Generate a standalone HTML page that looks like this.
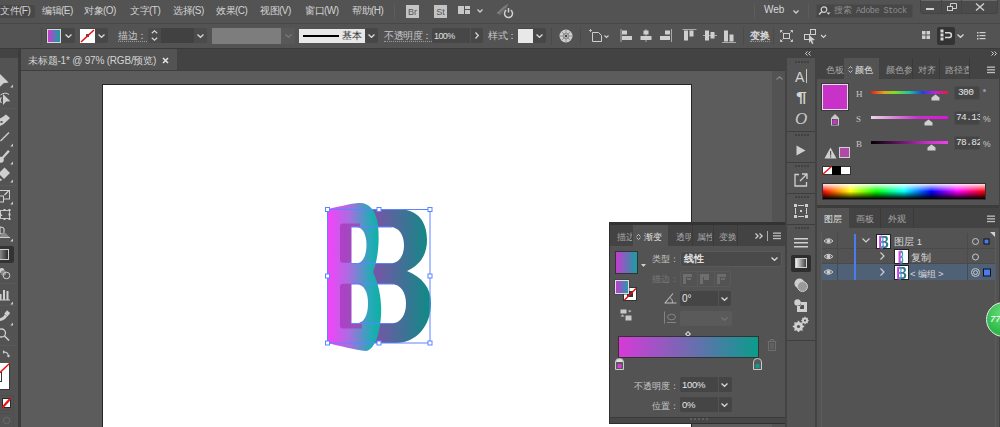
<!DOCTYPE html>
<html><head><meta charset="utf-8">
<style>
*{margin:0;padding:0;box-sizing:border-box}
html,body{width:1000px;height:427px;overflow:hidden;background:#535353;font-family:"Liberation Sans",sans-serif;color:#d2d2d2;font-size:10px}
.a{position:absolute}
.t{position:absolute;white-space:nowrap;line-height:10px;font-size:10px}
svg{position:absolute;overflow:visible}
.ul{border-bottom:1px dotted #9a9a9a}
.box{position:absolute;background:#474747;border-radius:2px}
.cb{position:absolute;background:#474747;border-radius:2px}
</style></head><body>
<!-- ================= MENU BAR ================= -->
<div class="a" style="left:0;top:0;width:1000px;height:23px;background:#535353"></div>
<div class="a" style="left:0;top:23px;width:1000px;height:1px;background:#474747"></div>
<div class="a" style="left:-3px;top:5px;width:38px;height:13px;background:#484848;border-radius:2px"></div>
<div class="t" style="left:0;top:6px;letter-spacing:-0.5px">文件(F)</div>
<div class="t" style="left:42px;top:6px;letter-spacing:-0.5px">编辑(E)</div>
<div class="t" style="left:84px;top:6px;letter-spacing:-0.5px">对象(O)</div>
<div class="t" style="left:130px;top:6px;letter-spacing:-0.5px">文字(T)</div>
<div class="t" style="left:173px;top:6px;letter-spacing:-0.5px">选择(S)</div>
<div class="t" style="left:216px;top:6px;letter-spacing:-0.5px">效果(C)</div>
<div class="t" style="left:260px;top:6px;letter-spacing:-0.5px">视图(V)</div>
<div class="t" style="left:305px;top:6px;letter-spacing:-0.5px">窗口(W)</div>
<div class="t" style="left:352px;top:6px;letter-spacing:-0.5px">帮助(H)</div>
<div class="a" style="left:394px;top:4px;width:1px;height:15px;background:#5c5c5c"></div>
<!-- Br St -->
<div class="a" style="left:406px;top:5px;width:13px;height:13px;background:#c4c4c4"></div>
<div class="t" style="left:407px;top:7px;width:11px;text-align:center;color:#555;font-size:9px">Br</div>
<div class="a" style="left:434px;top:5px;width:13px;height:13px;background:#c4c4c4"></div>
<div class="t" style="left:435px;top:7px;width:11px;text-align:center;color:#555;font-size:9px">St</div>
<!-- workspace layout icon -->
<div class="a" style="left:458px;top:6px;width:6px;height:8px;background:#c8c8c8"></div>
<div class="a" style="left:465px;top:6px;width:5px;height:3px;background:#c8c8c8"></div>
<div class="a" style="left:465px;top:10px;width:5px;height:4px;background:#c8c8c8"></div>
<svg style="left:477px;top:9px" width="6" height="4"><polyline points="0.5,0.5 3,3 5.5,0.5" fill="none" stroke="#cfcfcf" stroke-width="1.3"/></svg>
<!-- sync icon -->
<svg style="left:495px;top:2px" width="20" height="16">
 <path d="M1.5,11 L8,5 L13.5,1.5 L11,6.5 L5,13 Z" fill="#7c7c7c"/>
 <path d="M4,12.5 L10.5,6" stroke="#535353" stroke-width="0.8"/>
 <path d="M11.2,8.2 A4,4 0 1 0 15.8,8.2" fill="none" stroke="#d0d0d0" stroke-width="1.5"/>
 <line x1="13.5" y1="6" x2="13.5" y2="10.5" stroke="#d0d0d0" stroke-width="1.5"/>
</svg>
<!-- right of title bar -->
<div class="a" style="left:754px;top:4px;width:1px;height:15px;background:#5c5c5c"></div>
<div class="t" style="left:764px;top:5px;font-size:10px;color:#d8d8d8">Web</div>
<svg style="left:793px;top:10px" width="6" height="4"><polyline points="0.5,0.5 3,3 5.5,0.5" fill="none" stroke="#d0d0d0" stroke-width="1.3"/></svg>
<div class="a" style="left:808px;top:4px;width:1px;height:15px;background:#5c5c5c"></div>
<div class="a" style="left:816px;top:4px;width:97px;height:14px;background:#474747;border-radius:2px;border:1px solid #4d4d4d"></div>
<svg style="left:818px;top:6px" width="14" height="10">
 <circle cx="6" cy="3.6" r="2.8" fill="none" stroke="#d0d0d0" stroke-width="1.2"/>
 <line x1="4" y1="5.6" x2="1" y2="8.6" stroke="#d0d0d0" stroke-width="1.4"/>
 <path d="M8.5,6.5 L12.5,6.5 L10.5,8.7 Z" fill="#d0d0d0"/>
</svg>
<div class="t" style="left:834px;top:5px;color:#8e8e8e;font-size:9px">搜索</div>
<div class="t" style="left:856px;top:6px;color:#8e8e8e;font-family:'Liberation Mono',monospace;font-size:8.5px;letter-spacing:-0.5px">Adobe Stock</div>
<!-- window buttons -->
<div class="a" style="left:920px;top:-1px;width:78px;height:15px;background:#4b4b4b;border:1px solid #444;border-radius:0 0 3px 3px"></div>
<div class="a" style="left:921px;top:0;width:76px;height:1px;background:#6a6a6a"></div>
<div class="a" style="left:941px;top:0;width:1px;height:13px;background:#444"></div>
<div class="a" style="left:961px;top:0;width:1px;height:13px;background:#444"></div>
<div class="a" style="left:926px;top:8px;width:8px;height:2px;background:#cfcfcf"></div>
<svg style="left:947px;top:3px" width="10" height="8"><rect x="0.5" y="3.5" width="5" height="4" fill="none" stroke="#cfcfcf"/><path d="M3.5,3 V0.5 H9.5 V5.5 H6" fill="none" stroke="#cfcfcf"/></svg>
<svg style="left:975px;top:3px" width="10" height="8"><path d="M1,0.5 L9,7.5 M9,0.5 L1,7.5" stroke="#cfcfcf" stroke-width="1.4"/></svg>

<!-- ================= CONTROL BAR ================= -->
<div class="a" style="left:0;top:24px;width:1000px;height:24px;background:#535353"></div>
<div class="a" style="left:0;top:48px;width:1000px;height:1px;background:#3a3a3a"></div>
<div class="a" style="left:41px;top:27px;width:1px;height:18px;background:#4a4a4a"></div>
<!-- fill -->
<div class="cb" style="left:46px;top:28px;width:29px;height:15px"></div>
<div class="a" style="left:47px;top:29px;width:14px;height:14px;background:linear-gradient(90deg,#c83ad0,#16a0a0);border:1px solid #d8d8d8"></div>
<svg style="left:65px;top:34px" width="7" height="4"><polyline points="0.5,0.5 3.5,3.3 6.5,0.5" fill="none" stroke="#d6d6d6" stroke-width="1.3"/></svg>
<!-- stroke -->
<div class="cb" style="left:80px;top:28px;width:28px;height:15px"></div>
<div class="a" style="left:80px;top:29px;width:15px;height:14px;background:#fff"></div>
<div class="a" style="left:86px;top:34px;width:3px;height:3px;background:#555"></div>
<svg style="left:80px;top:29px" width="15" height="14"><line x1="1" y1="13" x2="14" y2="1" stroke="#e81010" stroke-width="1.6"/></svg>
<svg style="left:98px;top:34px" width="7" height="4"><polyline points="0.5,0.5 3.5,3.3 6.5,0.5" fill="none" stroke="#d6d6d6" stroke-width="1.3"/></svg>
<div class="t ul" style="left:118px;top:31px;color:#c8c8c8;letter-spacing:-0.4px">描边：</div>
<!-- stroke weight -->
<div class="cb" style="left:148px;top:28px;width:59px;height:15px;background:#4b4b4b"></div>
<svg style="left:151px;top:30px" width="7" height="11"><polyline points="0.8,3.2 3.5,0.8 6.2,3.2" fill="none" stroke="#d6d6d6" stroke-width="1.2"/><polyline points="0.8,7.8 3.5,10.2 6.2,7.8" fill="none" stroke="#d6d6d6" stroke-width="1.2"/></svg>
<div class="a" style="left:161px;top:28px;width:33px;height:15px;background:#414141"></div>
<svg style="left:197px;top:34px" width="7" height="4"><polyline points="0.5,0.5 3.5,3.3 6.5,0.5" fill="none" stroke="#d6d6d6" stroke-width="1.3"/></svg>
<!-- variable width -->
<div class="a" style="left:212px;top:28px;width:69px;height:16px;background:#7d7d7d"></div>
<div class="a" style="left:281px;top:28px;width:14px;height:16px;background:#585858"></div>
<svg style="left:285px;top:34px" width="7" height="4"><polyline points="0.5,0.5 3.5,3.3 6.5,0.5" fill="none" stroke="#7a7a7a" stroke-width="1.2"/></svg>
<!-- brush -->
<div class="a" style="left:299px;top:29px;width:66px;height:14px;background:#e8e8e8"></div>
<div class="a" style="left:303px;top:35px;width:36px;height:2px;background:#000"></div>
<div class="t" style="left:342px;top:31px;color:#303030">基本</div>
<div class="cb" style="left:365px;top:28px;width:13px;height:15px"></div>
<svg style="left:368px;top:34px" width="7" height="4"><polyline points="0.5,0.5 3.5,3.3 6.5,0.5" fill="none" stroke="#d6d6d6" stroke-width="1.3"/></svg>
<div class="t ul" style="left:384px;top:31px;color:#c8c8c8;letter-spacing:-0.5px">不透明度：</div>
<div class="cb" style="left:432px;top:28px;width:51px;height:15px"></div>
<div class="a" style="left:470px;top:28px;width:1px;height:15px;background:#535353"></div>
<div class="t" style="left:434px;top:31px;color:#e0e0e0;font-size:9px;letter-spacing:-0.6px">100%</div>
<svg style="left:475px;top:32px" width="4" height="7"><polyline points="0.5,0.5 3.3,3.5 0.5,6.5" fill="none" stroke="#d6d6d6" stroke-width="1.3"/></svg>
<div class="t" style="left:488px;top:31px;color:#c8c8c8;letter-spacing:-0.4px">样式：</div>
<div class="cb" style="left:518px;top:28px;width:28px;height:15px"></div>
<div class="a" style="left:518px;top:29px;width:15px;height:14px;background:#e8e8e8"></div>
<svg style="left:536px;top:34px" width="7" height="4"><polyline points="0.5,0.5 3.5,3.3 6.5,0.5" fill="none" stroke="#d6d6d6" stroke-width="1.3"/></svg>
<div class="a" style="left:551px;top:27px;width:1px;height:18px;background:#4a4a4a"></div>
<!-- globe / recolor -->
<svg style="left:559px;top:29px" width="15" height="15">
 <circle cx="7" cy="7" r="6.5" fill="#cfcfcf"/>
 <g stroke="#7a7a7a" stroke-width="0.7"><line x1="7" y1="1" x2="7" y2="13"/><line x1="1" y1="7" x2="13" y2="7"/><line x1="2.8" y1="2.8" x2="11.2" y2="11.2"/><line x1="11.2" y1="2.8" x2="2.8" y2="11.2"/></g>
 <circle cx="7" cy="7" r="3" fill="none" stroke="#7a7a7a" stroke-width="0.7"/>
 <circle cx="7" cy="7" r="1" fill="#333"/>
</svg>
<div class="a" style="left:580px;top:27px;width:1px;height:18px;background:#4a4a4a"></div>
<!-- artboard icon -->
<svg style="left:589px;top:29px" width="22" height="14">
 <path d="M3.5,3.5 H9.5 L12.5,6.5 V12.5 H3.5 Z" fill="none" stroke="#cfcfcf" stroke-width="1"/>
 <line x1="1.5" y1="0" x2="1.5" y2="3" stroke="#cfcfcf" stroke-width="0.8"/><line x1="0" y1="1.5" x2="3" y2="1.5" stroke="#cfcfcf" stroke-width="0.8"/>
 <polyline points="15.5,6.5 17.5,8.5 19.5,6.5" fill="none" stroke="#cfcfcf" stroke-width="1.1"/>
</svg>
<!-- align icons -->
<svg style="left:620px;top:28px" width="120" height="16" fill="#cfcfcf">
 <rect x="0.5" y="1" width="1" height="13" fill="#aaa"/><rect x="2" y="2.5" width="5" height="4"/><rect x="2" y="8" width="10" height="4"/>
 <rect x="25.5" y="1" width="1" height="13" fill="#aaa"/><rect x="23.5" y="2.5" width="5" height="4"/><rect x="20.5" y="8" width="11" height="4"/>
 <rect x="51" y="1" width="1" height="13" fill="#aaa"/><rect x="45" y="2.5" width="5" height="4"/><rect x="40" y="8" width="10" height="4"/>
 <rect x="62.5" y="1" width="14" height="1" fill="#aaa"/><rect x="64" y="2.5" width="4" height="10"/><rect x="69.5" y="2.5" width="4" height="6"/>
 <rect x="83" y="7" width="14" height="1" fill="#aaa"/><rect x="85" y="2.5" width="4" height="10"/><rect x="90.5" y="4" width="4" height="6.5"/>
 <rect x="102" y="14" width="14" height="1" fill="#aaa"/><rect x="104" y="2.5" width="4" height="11"/><rect x="109.5" y="6.5" width="4" height="7"/>
</svg>
<div class="a" style="left:743px;top:27px;width:1px;height:18px;background:#4a4a4a"></div>
<div class="t ul" style="left:750px;top:31px;color:#d8d8d8;font-weight:bold;font-size:9.5px">变换</div>
<div class="a" style="left:773px;top:27px;width:1px;height:18px;background:#4a4a4a"></div>
<!-- isolate icon -->
<svg style="left:780px;top:30px" width="14" height="13" fill="none" stroke="#cfcfcf">
 <rect x="3.5" y="3.5" width="6" height="5" stroke-width="1"/>
 <path d="M0.5,0.5 L2.5,2.5 M0.5,2.5 V0.5 H2.5 M12.5,0.5 L10.5,2.5 M10.5,0.5 H12.5 V2.5 M0.5,11.5 L2.5,9.5 M0.5,9.5 V11.5 H2.5 M12.5,11.5 L10.5,9.5 M12.5,9.5 V11.5 H10.5" stroke-width="0.9"/>
</svg>
<svg style="left:804px;top:29px" width="26" height="15">
 <rect x="0.5" y="5.5" width="5" height="5" fill="none" stroke="#cfcfcf"/>
 <rect x="6.5" y="0.5" width="5" height="5" fill="none" stroke="#cfcfcf"/>
 <path d="M5,6 L11,11 L8,11.5 L9.5,14.5 L8,15 L6.5,12 L5,14 Z" fill="#cfcfcf"/>
 <polyline points="17,6 19.5,8.5 22,6" fill="none" stroke="#cfcfcf" stroke-width="1.2"/>
</svg>
<!-- right icons -->
<svg style="left:921px;top:30px" width="11" height="11" fill="#cfcfcf">
 <rect x="1" y="1" width="3.5" height="3.5"/><rect x="5.5" y="1" width="3.5" height="3.5"/><rect x="1" y="5.5" width="3.5" height="3.5"/><rect x="5.5" y="5.5" width="3.5" height="3.5"/>
</svg>
<div class="a" style="left:937px;top:27px;width:18px;height:18px;background:#333;border-radius:2px"></div>
<svg style="left:940px;top:29px" width="14" height="13">
 <rect x="0.5" y="0.5" width="3" height="3" fill="#d8d8d8"/><rect x="0.5" y="4.5" width="3" height="3" fill="#d8d8d8"/><rect x="0.5" y="8.5" width="3" height="3" fill="#d8d8d8"/>
 <path d="M5,3.8 H9 A2.4,2.4 0 0 1 9,8.6 H5" fill="none" stroke="#d8d8d8" stroke-width="1.5"/>
</svg>
<svg style="left:957px;top:34px" width="7" height="4"><polyline points="0.5,0.5 3.5,3.3 6.5,0.5" fill="none" stroke="#d6d6d6" stroke-width="1.3"/></svg>
<svg style="left:977px;top:31px" width="10" height="9" fill="#cfcfcf">
 <rect x="0" y="1" width="1.5" height="1.5"/><rect x="2.5" y="1" width="6" height="1.2"/>
 <rect x="0" y="4" width="1.5" height="1.5"/><rect x="2.5" y="4" width="6" height="1.2"/>
 <rect x="0" y="7" width="1.5" height="1.5"/><rect x="2.5" y="7" width="6" height="1.2"/>
</svg>

<!-- ================= TAB BAR ================= -->
<div class="a" style="left:21px;top:49px;width:764px;height:22px;background:#434343"></div>
<div class="a" style="left:21px;top:49px;width:156px;height:21px;background:#535353"></div>
<div class="t" style="left:28px;top:56px;color:#d4d4d4;letter-spacing:-0.2px">未标题-1* @ 97% (RGB/预览)</div>
<svg style="left:162px;top:57px" width="7" height="7"><path d="M1,1 L6,6 M6,1 L1,6" stroke="#e6e6e6" stroke-width="1.5"/></svg>

<!-- ================= LEFT TOOLBAR ================= -->
<div class="a" style="left:0;top:49px;width:18px;height:378px;background:#535353"></div>
<div class="a" style="left:0;top:49px;width:18px;height:9px;background:#434343"></div>
<div class="a" style="left:18px;top:49px;width:3px;height:378px;background:#3c3c3c"></div>
<svg style="left:0;top:58px" width="18" height="369">
 <g transform="translate(0,-58)" fill="#cfcfcf">
  <path d="M-1,73 L8.6,82.6 L3.6,83.2 L0,86.8 Z"/>
  <path d="M10.3,87.5 L13,84.5 L13,87.5 Z"/>
  <path d="M3,94 L10.3,101.3 L6.3,101.5 L3,105 Z"/>
  <path d="M0.5,95 Q5,91.5 9,94.5" fill="none" stroke="#cfcfcf" stroke-width="1"/>
  <path d="M1.5,97.5 Q-1,100 1.5,103" fill="none" stroke="#cfcfcf" stroke-width="1.1"/>
  <rect x="0" y="108" width="16" height="1" fill="#5a5a5a"/>
  <path d="M6,114.5 L10,118 L7.5,120.5 Q4,124.5 0,126 L-1,119 Q3,117 6,114.5 Z"/>
  <rect x="0.5" y="121" width="2" height="2" fill="#535353"/>
  <path d="M0,140.5 L8.5,132 L9.5,133 L1,141.5 Z"/>
  <path d="M10.3,146.5 L13,143.5 L13,146.5 Z"/>
  <path d="M8,150 L9.8,151.5 L3,159 L1.5,157.5 Z"/><circle cx="0.8" cy="159.8" r="3"/>
  <path d="M10.3,164.5 L13,161.5 L13,164.5 Z"/>
  <path d="M4.5,167.5 L10,173 L4,179 L-1.5,173.5 Z"/><path d="M-1,177.5 L2.5,180 L0,181 L-1,181 Z"/>
  <path d="M10.3,182.5 L13,179.5 L13,182.5 Z"/>
  <rect x="0" y="185" width="16" height="1" fill="#5a5a5a"/>
  <rect x="-1" y="190.5" width="10.5" height="8.5" fill="none" stroke="#cfcfcf" stroke-width="1"/>
  <rect x="-1" y="196" width="4.5" height="6" fill="#535353" stroke="#cfcfcf" stroke-width="1"/>
  <path d="M4.5,195 L8.5,191" stroke="#cfcfcf" stroke-width="1.2"/>
  <path d="M10.3,204.5 L13,201.5 L13,204.5 Z"/>
  <rect x="0.5" y="210.5" width="9" height="8" fill="none" stroke="#cfcfcf" stroke-width="0.9"/><rect x="3.5" y="209" width="2" height="2"/><rect x="8.5" y="209" width="2" height="2"/><rect x="8.5" y="213.5" width="2" height="2"/><rect x="8.5" y="218" width="2" height="2"/><rect x="3.5" y="218" width="2" height="2"/>
  <path d="M0,212 L2.5,216 L0,216 Z"/>
  <path d="M0,227 Q4.5,227 4,230.5 Q4.5,234 0,234 Z" fill="none" stroke="#cfcfcf" stroke-width="1.2"/>
  <path d="M-1,237 L4,231.5 L9.5,237 Z" fill="#8a8a8a"/>
  <rect x="0" y="237" width="10" height="1"/>
  <path d="M10.3,241.5 L13,238.5 L13,241.5 Z"/>
 </g>
</svg>
<div class="a" style="left:0;top:246px;width:14px;height:17px;background:#333;border-radius:0 2px 2px 0"></div>
<div class="a" style="left:-1px;top:249px;width:10px;height:11px;border:1px solid #cfcfcf;background:linear-gradient(90deg,#888,#2a2a2a)"></div>
<svg style="left:0;top:262px" width="18" height="165">
 <g transform="translate(0,-262)" fill="#cfcfcf">
  <circle cx="1.8" cy="270.5" r="2.5" fill="#cfcfcf"/>
  <circle cx="3.5" cy="273" r="2.8" fill="#8a8a8a"/>
  <circle cx="6.5" cy="275.5" r="3.3" fill="none" stroke="#cfcfcf" stroke-width="1"/>
  <rect x="0" y="283" width="16" height="1" fill="#5a5a5a"/>
  <rect x="0" y="294" width="1.5" height="6"/><rect x="3" y="290" width="2" height="10"/><rect x="6.5" y="291" width="2" height="9"/><rect x="0" y="299.5" width="10" height="1"/>
  <path d="M10.3,304.5 L13,301.5 L13,304.5 Z"/>
  <rect x="0" y="305" width="16" height="1" fill="#5a5a5a"/>
  <path d="M4.3,313.8 L7,310.3 L10.2,313 L7.5,316.5 Z"/><path d="M4.8,314.5 Q3,318 -1,318.5 L-1,321 Q4.5,321 7.2,316.3 Z"/>
  <path d="M10.3,325.5 L13,322.5 L13,325.5 Z"/>
  <circle cx="1.5" cy="333" r="4" fill="none" stroke="#cfcfcf" stroke-width="1.3"/>
  <path d="M4.5,336 L9,340.5" stroke="#cfcfcf" stroke-width="1.6"/>
  <rect x="0" y="345" width="16" height="1" fill="#5a5a5a"/>
  <path d="M3.5,352 Q8,352 8.5,356" fill="none" stroke="#cfcfcf" stroke-width="1.1"/>
  <path d="M3,350 L5,352 L3,354 Z"/><path d="M6.5,355.5 L10.5,355.5 L8.5,357.5 Z"/>
 </g>
</svg>
<div class="a" style="left:0;top:363px;width:10px;height:27px;background:#fff;border-right:1px solid #3a3a3a;border-bottom:1px solid #3a3a3a"></div>
<div class="a" style="left:-1px;top:372px;width:3px;height:10px;border:1px solid #333"></div>
<svg style="left:0;top:363px" width="10" height="10"><line x1="0" y1="9.5" x2="9.5" y2="0.5" stroke="#e81010" stroke-width="1.5"/></svg>
<div class="a" style="left:-1px;top:395px;width:15px;height:16px;border:1px solid #4e4e4e;border-radius:2px"></div>
<div class="a" style="left:2px;top:398px;width:9px;height:10px;background:#fff;border:1px solid #2a2a2a"></div>
<svg style="left:2px;top:398px" width="9" height="10"><line x1="0.5" y1="9.5" x2="8.5" y2="0.5" stroke="#e81010" stroke-width="2.2"/></svg>
<div class="a" style="left:-1px;top:413px;width:15px;height:16px;border:1px solid #4e4e4e;border-radius:2px"></div>
<svg style="left:2px;top:416px" width="9" height="9"><circle cx="4.5" cy="4.5" r="3.2" fill="none" stroke="#6a6a6a" stroke-width="1"/></svg>


<!-- ================= CANVAS ================= -->
<div class="a" style="left:21px;top:71px;width:751px;height:356px;background:#5c5c5c"></div>
<div class="a" style="left:21px;top:70px;width:764px;height:1px;background:#3e3e3e"></div>
<div class="a" style="left:772px;top:71px;width:13px;height:356px;background:#535353"></div>
<svg style="left:776px;top:76px" width="7" height="4"><polyline points="0.5,3.5 3.5,0.8 6.5,3.5" fill="none" stroke="#8a8a8a" stroke-width="1.1"/></svg>
<div class="a" style="left:102px;top:84px;width:590px;height:343px;background:#fff;border:1px solid #262626;border-bottom:none"></div>


<!-- ================= ARTWORK ================= -->
<svg style="left:0;top:0" width="1000" height="427">
 <defs>
  <linearGradient id="gb" gradientUnits="userSpaceOnUse" x1="372" y1="0" x2="431" y2="0"><stop offset="0" stop-color="#7c52aa"/><stop offset="1" stop-color="#0c8c84"/></linearGradient>
  <linearGradient id="gf" gradientUnits="userSpaceOnUse" x1="328" y1="0" x2="381" y2="0"><stop offset="0" stop-color="#f642fa"/><stop offset="0.4" stop-color="#a86ee0"/><stop offset="0.8" stop-color="#26aab8"/><stop offset="1" stop-color="#0cb0a4"/></linearGradient>
  <linearGradient id="gh" gradientUnits="userSpaceOnUse" x1="340" y1="0" x2="362" y2="0"><stop offset="0" stop-color="#b23ec6"/><stop offset="1" stop-color="#8c58b8"/></linearGradient>
 </defs>
 <g id="artall"><g id="artback"><path fill="url(#gb)" fill-rule="evenodd" d="M372,209.5 H400 C418,209.5 427,222 427,240 C427,255 420,265 407,271 C422,277 431,288 431,303 C431,326 416,343 396,343 H372 Z
  M372,227 H390 C399,227 404,235 404,245.2 C404,255.5 399,263.5 390,263.5 H372 Z
  M372,284 H391 C401,284 406,293 406,303.8 C406,314.5 401,323.5 391,323.5 H372 Z"/></g>
 <g id="artfront"><path fill="url(#gf)" d="M328,209 C338,207 348,204 358,203 C369,202 376,210 378,225 C380,245 377,262 373,272 C379,285 382,300 381,315 C380,335 374,350 366,351 C355,350 340,346 328,343 Z"/>
 <path fill="url(#gh)" d="M343,223.4 H360 V262.7 H343 Q340,262.7 340,259.7 V226.4 Q340,223.4 343,223.4 Z"/>
 <path fill="url(#gh)" d="M343,283.7 H362 V328.5 H343 Q340,328.5 340,325.5 V286.7 Q340,283.7 343,283.7 Z"/>
 <path fill="#fff" d="M351.5,227 H356 C363,227 366.5,235 366.5,245 C366.5,255 363,263.5 356,263.5 H351.5 Z"/>
 <path fill="#fff" d="M351.5,284 H356 C364,284 368,292 368,303.5 C368,315 364,323.5 356,323.5 H351.5 Z"/>
 </g></g>
 <g stroke="#5b84ff" stroke-width="1" fill="none">
  <rect x="327.5" y="209.5" width="102.5" height="133.5"/>
  <line x1="351" y1="227" x2="392" y2="227"/><line x1="351" y1="263.5" x2="392" y2="263.5"/>
  <line x1="351" y1="284" x2="393" y2="284"/><line x1="351" y1="323.5" x2="393" y2="323.5"/>
 </g>
 <g fill="#fff" stroke="#5b84ff" stroke-width="1"><rect x="325.5" y="207.5" width="4" height="4"/><rect x="377" y="207.5" width="4" height="4"/><rect x="428" y="207.5" width="4" height="4"/><rect x="325.5" y="274" width="4" height="4"/><rect x="428" y="274" width="4" height="4"/><rect x="325.5" y="341" width="4" height="4"/><rect x="377" y="341" width="4" height="4"/><rect x="428" y="341" width="4" height="4"/></g>
</svg>


<!-- ================= GRADIENT PANEL ================= -->
<div class="a" style="left:609px;top:222px;width:177px;height:202px;background:#535353;border:1px solid #2e2e2e;border-top:3px solid #333"></div>
<div class="a" style="left:610px;top:225px;width:175px;height:21px;background:#434343"></div>
<div class="a" style="left:633px;top:225px;width:35px;height:21px;background:#535353"></div>
<div class="t" style="left:617px;top:232px;color:#a8a8a8;font-size:9px;width:15px;overflow:hidden">描边</div>
<svg style="left:636px;top:234px" width="5" height="6"><path d="M0.6,2.3 L2.5,0.5 L4.4,2.3 M0.6,3.7 L2.5,5.5 L4.4,3.7" fill="none" stroke="#d0d0d0" stroke-width="0.9"/></svg>
<div class="t" style="left:644px;top:232px;color:#e6e6e6;font-size:9px">渐变</div>
<div class="t" style="left:676px;top:232px;color:#a8a8a8;font-size:9px;width:15px;overflow:hidden">透明</div>
<div class="a" style="left:692px;top:225px;width:1px;height:21px;background:#3a3a3a"></div>
<div class="t" style="left:697px;top:232px;color:#a8a8a8;font-size:9px;width:15px;overflow:hidden">属性</div>
<div class="a" style="left:713px;top:225px;width:1px;height:21px;background:#3a3a3a"></div>
<div class="t" style="left:719px;top:232px;color:#a8a8a8;font-size:9px;width:17px;overflow:hidden">变换</div>
<div class="a" style="left:737px;top:225px;width:1px;height:21px;background:#3a3a3a"></div>
<svg style="left:755px;top:233px" width="8" height="6"><path d="M0.5,0.5 L3.2,3 L0.5,5.5 M4.5,0.5 L7.2,3 L4.5,5.5" fill="none" stroke="#d8d8d8" stroke-width="1.1"/></svg>
<div class="a" style="left:767px;top:231px;width:1px;height:10px;background:#aaa"></div>
<svg style="left:773px;top:232px" width="9" height="8" fill="#bdbdbd"><rect x="0" y="0.5" width="8" height="1.3"/><rect x="0" y="3.2" width="8" height="1.3"/><rect x="0" y="5.9" width="8" height="1.3"/></svg>
<!-- swatch -->
<div class="a" style="left:615px;top:251px;width:23px;height:23px;background:linear-gradient(90deg,#c83ad0,#16a0a0);border:1px solid #333"></div>
<svg style="left:641px;top:264px" width="5" height="3"><path d="M0,0 H5 L2.5,3 Z" fill="#d0d0d0"/></svg>
<div class="t" style="left:652px;top:254px;color:#c8c8c8;font-size:9px">类型：</div>
<div class="a" style="left:680px;top:251px;width:102px;height:16px;background:#4a4a4a;border-radius:3px;border:1px solid #5a5a5a"></div>
<div class="t" style="left:684px;top:254px;color:#e0e0e0;font-weight:bold">线性</div>
<svg style="left:771px;top:257px" width="7" height="4"><polyline points="0.5,0.5 3.5,3.3 6.5,0.5" fill="none" stroke="#d6d6d6" stroke-width="1.3"/></svg>
<!-- fill/stroke -->
<div class="a" style="left:623px;top:287px;width:14px;height:14px;background:#fff;border:1px solid #333"></div>
<div class="a" style="left:627px;top:291px;width:6px;height:6px;background:#333"></div>
<svg style="left:623px;top:287px" width="14" height="14"><line x1="1.5" y1="13" x2="13" y2="1.5" stroke="#e81010" stroke-width="1.6"/></svg>
<div class="a" style="left:615px;top:280px;width:14px;height:14px;background:linear-gradient(90deg,#c03ad0,#2898b0);border:1px solid #ddd;box-shadow:0 0 0 0.5px #3a3a3a"></div>
<!-- swap icon -->
<svg style="left:620px;top:309px" width="13" height="12" fill="#c8c8c8">
 <rect x="0.5" y="0.5" width="6" height="4"/><path d="M8,1.5 H11.5 L9.75,3.5 Z"/>
 <path d="M0.5,7.5 L2.5,5.5 L4.5,7.5 Z"/><rect x="5.5" y="6.5" width="6" height="5"/>
</svg>
<div class="t" style="left:652px;top:274px;color:#7a7a7a;font-size:9px">描边：</div>
<div class="a" style="left:680px;top:271px;width:51px;height:16px;border:1px solid #5a5a5a;border-radius:2px"></div>
<div class="a" style="left:697px;top:271px;width:1px;height:16px;background:#5a5a5a"></div>
<div class="a" style="left:714px;top:271px;width:1px;height:16px;background:#5a5a5a"></div>
<svg style="left:683px;top:274px" width="46" height="10" fill="#6e6e6e">
 <path d="M0,0 H9 V3 H3 V10 H0 Z M4,4 H8 V6 H4 Z"/>
 <path d="M17,0 H26 V6 H21 V3 H20 V10 H17 Z"/>
 <path d="M34,0 H43 V3 H37 V10 H34 Z M38,4 H42 V6 H38 Z" opacity="0.9"/>
</svg>
<!-- angle -->
<svg style="left:664px;top:292px" width="13" height="12"><path d="M0.5,11 H12.5 M1,11 L9,1.5" fill="none" stroke="#bdbdbd" stroke-width="1.1"/><path d="M6,5.5 Q9,7.5 8.5,11" fill="none" stroke="#bdbdbd" stroke-width="0.9"/></svg>
<div class="cb" style="left:680px;top:291px;width:51px;height:15px;background:#454545"></div>
<div class="a" style="left:718px;top:291px;width:1px;height:15px;background:#535353"></div>
<div class="t" style="left:682px;top:294px;color:#e6e6e6">0°</div>
<svg style="left:721px;top:297px" width="7" height="4"><polyline points="0.5,0.5 3.5,3.3 6.5,0.5" fill="none" stroke="#d6d6d6" stroke-width="1.3"/></svg>
<!-- aspect -->
<svg style="left:663px;top:311px" width="14" height="13" fill="none" stroke="#8a8a8a" stroke-width="0.9"><line x1="1.5" y1="0.5" x2="1.5" y2="12.5"/><ellipse cx="8.5" cy="6" rx="4" ry="2.8"/><line x1="4" y1="11.5" x2="13" y2="11.5"/></svg>
<div class="a" style="left:680px;top:311px;width:52px;height:15px;background:#5a5a5a;border-radius:2px"></div>
<svg style="left:721px;top:317px" width="7" height="4"><polyline points="0.5,0.5 3.5,3.3 6.5,0.5" fill="none" stroke="#777" stroke-width="1.1"/></svg>
<!-- diamond -->
<svg style="left:685px;top:331px" width="6" height="6"><path d="M3,0.7 L5.3,3 L3,5.3 L0.7,3 Z" fill="none" stroke="#d8d8d8" stroke-width="1.1"/></svg>
<!-- gradient bar -->
<div class="a" style="left:618px;top:336px;width:141px;height:22px;background:#333"></div>
<div class="a" style="left:619px;top:337px;width:139px;height:20px;background:linear-gradient(90deg,#d63ad8,#0a9c8c)"></div>
<!-- stops -->
<svg style="left:615px;top:358px" width="9" height="12"><path d="M0.5,11.5 V4 Q0.5,0.5 4.5,0.5 Q8.5,0.5 8.5,4 V11.5 Z" fill="#5a5a5a" stroke="#c8c8c8" stroke-width="1"/><path d="M1,4 Q1,1 4.5,1 Q8,1 8,4 Z" fill="#e0e0e0"/><rect x="2.5" y="6" width="4" height="4" fill="#d63ad8"/></svg>
<svg style="left:753px;top:358px" width="9" height="12"><path d="M0.5,11.5 V4 Q0.5,0.5 4.5,0.5 Q8.5,0.5 8.5,4 V11.5 Z" fill="#5a5a5a" stroke="#c8c8c8" stroke-width="1"/><rect x="2.5" y="6" width="4" height="4" fill="#0a9c8c"/></svg>
<!-- trash -->
<svg style="left:767px;top:339px" width="10" height="12" fill="none" stroke="#6e6e6e"><path d="M0.5,2.5 H9.5 M3.5,2.5 V0.5 H6.5 V2.5 M1.5,2.5 V11.5 H8.5 V2.5 M4,4 V10 M6,4 V10"/></svg>
<div class="t" style="left:634px;top:381px;color:#c8c8c8;font-size:9px">不透明度：</div>
<div class="cb" style="left:680px;top:377px;width:52px;height:15px;background:#454545"></div>
<div class="a" style="left:718px;top:377px;width:1px;height:15px;background:#535353"></div>
<div class="t" style="left:682px;top:380px;color:#e6e6e6;font-size:9.5px;letter-spacing:-0.3px">100%</div>
<svg style="left:721px;top:383px" width="7" height="4"><polyline points="0.5,0.5 3.5,3.3 6.5,0.5" fill="none" stroke="#d6d6d6" stroke-width="1.3"/></svg>
<div class="t" style="left:652px;top:401px;color:#c8c8c8;font-size:9px">位置：</div>
<div class="cb" style="left:680px;top:397px;width:52px;height:15px;background:#454545"></div>
<div class="a" style="left:718px;top:397px;width:1px;height:15px;background:#535353"></div>
<div class="t" style="left:682px;top:400px;color:#e6e6e6;font-size:9.5px;letter-spacing:-0.3px">0%</div>
<svg style="left:721px;top:403px" width="7" height="4"><polyline points="0.5,0.5 3.5,3.3 6.5,0.5" fill="none" stroke="#d6d6d6" stroke-width="1.3"/></svg>
<div class="a" style="left:610px;top:417px;width:175px;height:6px;background:#474747;border-top:1px solid #3a3a3a"></div>
<svg style="left:690px;top:418px" width="22" height="3" fill="#5e5e5e"><rect x="0" y="0" width="2" height="2"/><rect x="4" y="0" width="2" height="2"/><rect x="8" y="0" width="2" height="2"/><rect x="12" y="0" width="2" height="2"/><rect x="16" y="0" width="2" height="2"/></svg>

<!-- ================= RIGHT DOCK ================= -->
<div class="a" style="left:785px;top:49px;width:215px;height:378px;background:#434343"></div>
<svg style="left:805px;top:51px" width="6" height="5"><path d="M2.5,0.5 L0.5,2.5 L2.5,4.5 M5.5,0.5 L3.5,2.5 L5.5,4.5" fill="none" stroke="#d8d8d8" stroke-width="1"/></svg>
<svg style="left:991px;top:51px" width="6" height="5"><path d="M0.5,0.5 L2.5,2.5 L0.5,4.5 M3.5,0.5 L5.5,2.5 L3.5,4.5" fill="none" stroke="#d8d8d8" stroke-width="1"/></svg>

<!-- icon column -->
<div class="a" style="left:787px;top:58px;width:28px;height:369px;background:#535353"></div>
<svg style="left:787px;top:58px" width="28" height="290">
 <g fill="#404040">
  <rect x="8" y="3" width="2" height="2"/><rect x="11" y="3" width="2" height="2"/><rect x="14" y="3" width="2" height="2"/><rect x="17" y="3" width="2" height="2"/><rect x="20" y="3" width="2" height="2"/>
  <rect x="8" y="76" width="2" height="2"/><rect x="11" y="76" width="2" height="2"/><rect x="14" y="76" width="2" height="2"/><rect x="17" y="76" width="2" height="2"/><rect x="20" y="76" width="2" height="2"/>
  <rect x="8" y="107" width="2" height="2"/><rect x="11" y="107" width="2" height="2"/><rect x="14" y="107" width="2" height="2"/><rect x="17" y="107" width="2" height="2"/><rect x="20" y="107" width="2" height="2"/>
  <rect x="8" y="138" width="2" height="2"/><rect x="11" y="138" width="2" height="2"/><rect x="14" y="138" width="2" height="2"/><rect x="17" y="138" width="2" height="2"/><rect x="20" y="138" width="2" height="2"/>
  <rect x="8" y="169" width="2" height="2"/><rect x="11" y="169" width="2" height="2"/><rect x="14" y="169" width="2" height="2"/><rect x="17" y="169" width="2" height="2"/><rect x="20" y="169" width="2" height="2"/>
 </g>
 <g fill="#3e3e3e"><rect x="0" y="73" width="28" height="1"/><rect x="0" y="104" width="28" height="1"/><rect x="0" y="135" width="28" height="1"/><rect x="0" y="166" width="28" height="1"/><rect x="0" y="282" width="28" height="1"/></g>
</svg>
<div class="t" style="left:795px;top:70px;font-size:14px;line-height:14px;color:#d4d4d4">A</div>
<div class="a" style="left:806px;top:69px;width:1px;height:14px;background:#c8c8c8"></div>
<div class="t" style="left:796px;top:89px;font-size:15px;line-height:15px;color:#d4d4d4;font-weight:bold;transform:scaleX(1.3);transform-origin:left">¶</div>
<div class="t" style="left:795px;top:110px;font-size:17px;line-height:17px;color:#c8c8c8;font-style:italic;font-family:'Liberation Serif',serif">O</div>
<svg style="left:796px;top:145px" width="10" height="11"><path d="M0.5,0.5 L9.5,5.5 L0.5,10.5 Z" fill="#cfcfcf"/></svg>
<svg style="left:794px;top:173px" width="14" height="14" fill="none" stroke="#cfcfcf" stroke-width="1.3"><path d="M5,1.5 H1 V13 H12.5 V9"/><path d="M6,8 L12.5,1.5 M8,1 H13 V6"/></svg>
<svg style="left:794px;top:204px" width="14" height="14" fill="#cfcfcf">
 <rect x="0" y="0" width="3" height="3"/><rect x="11" y="0" width="3" height="3"/><rect x="0" y="11" width="3" height="3"/><rect x="11" y="11" width="3" height="3"/>
 <rect x="1" y="4" width="1" height="6"/><rect x="12" y="4" width="1" height="6"/><rect x="4" y="1" width="6" height="1"/><rect x="4" y="12" width="6" height="1"/>
 <rect x="6" y="6" width="2" height="2"/>
</svg>
<svg style="left:794px;top:238px" width="14" height="10" fill="#d0d0d0"><rect x="0" y="0" width="14" height="1.5"/><rect x="0" y="4" width="14" height="1.5"/><rect x="0" y="8" width="14" height="1.5"/></svg>
<div class="a" style="left:791px;top:255px;width:20px;height:17px;background:#2e2e2e;border-radius:2px"></div>
<div class="a" style="left:795px;top:258px;width:12px;height:10px;border:1px solid #cfcfcf;background:linear-gradient(90deg,#eee,#444)"></div>
<svg style="left:794px;top:278px" width="14" height="14"><circle cx="5.5" cy="5.5" r="5" fill="#cfcfcf"/><circle cx="8.5" cy="8.5" r="5" fill="#9a9a9a" stroke="#cfcfcf" stroke-width="1"/></svg>
<svg style="left:794px;top:299px" width="14" height="14" fill="#cfcfcf"><circle cx="3.5" cy="3.5" r="3.2"/><path d="M6,3 H13 V13 H3 V7 H6 A3,3 0 0 0 6,3 Z M7,6 A3,3 0 0 1 6,8 V10 H10 V6 Z"/></svg>
<svg style="left:793px;top:317px" width="16" height="15" fill="#cfcfcf">
 <circle cx="5.5" cy="9.5" r="4.5"/><circle cx="5.5" cy="9.5" r="1.6" fill="#535353"/>
 <circle cx="12" cy="3.5" r="3"/><circle cx="12" cy="3.5" r="1.1" fill="#535353"/>
 <g stroke="#cfcfcf" stroke-width="1.6"><line x1="5.5" y1="3.8" x2="5.5" y2="15"/><line x1="-0.2" y1="9.5" x2="11.2" y2="9.5"/><line x1="1.5" y1="5.5" x2="9.5" y2="13.5"/><line x1="9.5" y1="5.5" x2="1.5" y2="13.5"/></g>
 <g stroke="#cfcfcf" stroke-width="1.2"><line x1="12" y1="-0.2" x2="12" y2="7.2"/><line x1="8.3" y1="3.5" x2="15.7" y2="3.5"/><line x1="9.4" y1="0.9" x2="14.6" y2="6.1"/><line x1="14.6" y1="0.9" x2="9.4" y2="6.1"/></g>
 <circle cx="5.5" cy="9.5" r="1.6" fill="#535353"/><circle cx="12" cy="3.5" r="1.1" fill="#535353"/>
</svg>

<!-- color panel -->
<div class="a" style="left:817px;top:58px;width:182px;height:147px;background:#535353"></div>
<div class="a" style="left:817px;top:58px;width:182px;height:21px;background:#434343"></div>
<div class="a" style="left:844px;top:58px;width:35px;height:21px;background:#535353"></div>
<div class="t" style="left:826px;top:65px;color:#a8a8a8;font-size:9px">色板</div>
<svg style="left:848px;top:66px" width="5" height="7"><path d="M0.6,2.5 L2.5,0.5 L4.4,2.5 M0.6,4.5 L2.5,6.5 L4.4,4.5" fill="none" stroke="#d0d0d0" stroke-width="0.9"/></svg>
<div class="t" style="left:855px;top:65px;color:#e6e6e6;font-size:9px">颜色</div>
<div class="t" style="left:886px;top:65px;color:#a8a8a8;font-size:9px;width:26px;overflow:hidden">颜色参</div>
<div class="a" style="left:912px;top:58px;width:1px;height:21px;background:#3a3a3a"></div>
<div class="t" style="left:918px;top:65px;color:#a8a8a8;font-size:9px">对齐</div>
<div class="a" style="left:939px;top:58px;width:1px;height:21px;background:#3a3a3a"></div>
<div class="t" style="left:945px;top:65px;color:#a8a8a8;font-size:9px;width:25px;overflow:hidden">路径查</div>
<div class="a" style="left:969px;top:58px;width:1px;height:21px;background:#3a3a3a"></div>
<svg style="left:987px;top:66px" width="9" height="8" fill="#bdbdbd"><rect x="0" y="0.5" width="8" height="1.3"/><rect x="0" y="3.2" width="8" height="1.3"/><rect x="0" y="5.9" width="8" height="1.3"/></svg>
<div class="a" style="left:822px;top:84px;width:26px;height:26px;background:#c832c8;border:1px solid #e0e0e0;box-shadow:0 0 0 1px #3a3a3a"></div>
<svg style="left:830px;top:113px" width="10" height="13"><path d="M1,12.5 V5 L5,1 L9,5 V12.5 Z" fill="#c8c8c8"/><rect x="2.5" y="6.5" width="5" height="5" fill="#c832c8" stroke="#333" stroke-width="0.6"/></svg>
<div class="t" style="left:856px;top:89px;color:#c8c8c8;font-family:'Liberation Serif',serif;font-size:9px">H</div>
<div class="t" style="left:856px;top:114px;color:#c8c8c8;font-family:'Liberation Serif',serif;font-size:9px">S</div>
<div class="t" style="left:856px;top:139px;color:#c8c8c8;font-family:'Liberation Serif',serif;font-size:9px">B</div>
<div class="a" style="left:871px;top:91px;width:77px;height:3px;background:linear-gradient(90deg,#e02020,#e0a020 17%,#80e020 30%,#20c0a0 50%,#2040e0 67%,#c020e0 83%,#e02030)"></div>
<div class="a" style="left:871px;top:116px;width:77px;height:3px;background:linear-gradient(90deg,#e8d8e8,#c832c8 60%,#e010e0)"></div>
<div class="a" style="left:871px;top:141px;width:77px;height:3px;background:linear-gradient(90deg,#000,#501050 30%,#c832c8 75%,#f040f0)"></div>
<svg style="left:931px;top:94px" width="9" height="7"><path d="M0.5,6.5 V3.5 L4.5,0.5 L8.5,3.5 V6.5 Z" fill="#d0d0d0"/></svg>
<svg style="left:924px;top:119px" width="9" height="7"><path d="M0.5,6.5 V3.5 L4.5,0.5 L8.5,3.5 V6.5 Z" fill="#d0d0d0"/></svg>
<svg style="left:927px;top:144px" width="9" height="7"><path d="M0.5,6.5 V3.5 L4.5,0.5 L8.5,3.5 V6.5 Z" fill="#d0d0d0"/></svg>
<div class="cb" style="left:954px;top:86px;width:26px;height:14px;background:#454545;border:1px solid #4c4c4c"></div>
<div class="cb" style="left:954px;top:111px;width:26px;height:14px;background:#454545;border:1px solid #4c4c4c"></div>
<div class="cb" style="left:954px;top:136px;width:26px;height:14px;background:#454545;border:1px solid #4c4c4c"></div>
<div class="t" style="left:958px;top:88px;color:#e6e6e6;font-family:'Liberation Mono',monospace;font-size:9.5px;letter-spacing:-0.6px">300</div>
<div class="t" style="left:956px;top:113px;color:#e6e6e6;font-family:'Liberation Mono',monospace;font-size:9.5px;letter-spacing:-0.6px;width:24px;overflow:hidden">74.13</div>
<div class="t" style="left:956px;top:138px;color:#e6e6e6;font-family:'Liberation Mono',monospace;font-size:9.5px;letter-spacing:-0.6px;width:24px;overflow:hidden">78.82</div>
<div class="a" style="left:983px;top:89px;width:3px;height:3px;border-radius:50%;background:#8a9ab8"></div>
<div class="t" style="left:983px;top:114px;color:#c8c8c8;font-size:8.5px">%</div>
<div class="t" style="left:983px;top:139px;color:#c8c8c8;font-size:8.5px">%</div>
<svg style="left:824px;top:147px" width="13" height="12"><path d="M6.5,0.5 L12.5,11.5 H0.5 Z" fill="#d0d0d0"/><rect x="6" y="4" width="1.2" height="4.5" fill="#535353"/><rect x="6" y="9.3" width="1.2" height="1.2" fill="#535353"/></svg>
<div class="a" style="left:839px;top:147px;width:11px;height:11px;background:#b04aa8;border:1px solid #d0d0d0"></div>
<div class="a" style="left:822px;top:166px;width:29px;height:9px;background:#fff;border:1px solid #333"></div>
<div class="a" style="left:832px;top:166px;width:9px;height:9px;background:#000"></div>
<svg style="left:822px;top:166px" width="10" height="9"><line x1="0.5" y1="8.5" x2="9.5" y2="0.5" stroke="#e81010" stroke-width="1.4"/></svg>
<div class="a" style="left:822px;top:183px;width:164px;height:17px;background:linear-gradient(180deg,rgba(255,255,255,0.9) 0%,rgba(255,255,255,0) 50%,rgba(0,0,0,0) 50%,rgba(0,0,0,1) 100%),linear-gradient(90deg,#f00,#ff0 17%,#0f0 33%,#0ff 50%,#00f 67%,#f0f 83%,#f00);border:1px solid #333"></div>
<div class="a" style="left:817px;top:205px;width:182px;height:3px;background:#3c3c3c"></div>

<!-- layers panel -->
<div class="a" style="left:817px;top:208px;width:182px;height:219px;background:#535353"></div>
<div class="a" style="left:817px;top:208px;width:182px;height:20px;background:#434343"></div>
<div class="a" style="left:817px;top:208px;width:32px;height:20px;background:#535353"></div>
<div class="t" style="left:824px;top:214px;color:#e6e6e6;font-size:9px">图层</div>
<div class="t" style="left:856px;top:214px;color:#a8a8a8;font-size:9px">画板</div>
<div class="a" style="left:880px;top:208px;width:1px;height:20px;background:#3a3a3a"></div>
<div class="t" style="left:888px;top:214px;color:#a8a8a8;font-size:9px">外观</div>
<div class="a" style="left:913px;top:208px;width:1px;height:20px;background:#3a3a3a"></div>
<svg style="left:987px;top:215px" width="9" height="8" fill="#bdbdbd"><rect x="0" y="0.5" width="8" height="1.3"/><rect x="0" y="3.2" width="8" height="1.3"/><rect x="0" y="5.9" width="8" height="1.3"/></svg>
<div class="a" style="left:821px;top:232px;width:175px;height:195px;border-left:1px solid #5c5c5c;border-right:1px solid #5c5c5c"></div>
<div class="a" style="left:822px;top:233px;width:173px;height:16px;border-bottom:1px solid #4a4a4a"></div>
<div class="a" style="left:822px;top:249px;width:173px;height:15px;border-bottom:1px solid #4a4a4a"></div>
<div class="a" style="left:822px;top:264px;width:173px;height:16px;background:#4f6177"></div>
<div class="a" style="left:837px;top:233px;width:1px;height:47px;background:#4a4a4a"></div>
<div class="a" style="left:967px;top:233px;width:1px;height:47px;background:#4a4a4a"></div>
<svg style="left:823px;top:237px" width="12" height="40" fill="none" stroke="#d0d0d0" stroke-width="1">
 <path d="M1,4 Q5.5,-0.5 10,4 Q5.5,8.5 1,4 Z"/><circle cx="5.5" cy="4" r="1.5" fill="#d0d0d0"/>
 <path d="M1,19.5 Q5.5,15 10,19.5 Q5.5,24 1,19.5 Z"/><circle cx="5.5" cy="19.5" r="1.5" fill="#d0d0d0"/>
 <path d="M1,35 Q5.5,30.5 10,35 Q5.5,39.5 1,35 Z"/><circle cx="5.5" cy="35" r="1.5" fill="#d0d0d0"/>
</svg>
<div class="a" style="left:854px;top:234px;width:2px;height:46px;background:#4a7cf0"></div>
<svg style="left:862px;top:238px" width="8" height="5"><polyline points="0.5,0.5 4,4 7.5,0.5" fill="none" stroke="#d0d0d0" stroke-width="1.2"/></svg>
<svg style="left:880px;top:252px" width="5" height="8"><polyline points="0.5,0.5 4,4 0.5,7.5" fill="none" stroke="#d0d0d0" stroke-width="1.2"/></svg>
<svg style="left:880px;top:268px" width="5" height="8"><polyline points="0.5,0.5 4,4 0.5,7.5" fill="none" stroke="#d0d0d0" stroke-width="1.2"/></svg>
<!-- thumbs -->
<svg style="left:876px;top:234px" width="15" height="15"><rect x="0.5" y="0.5" width="14" height="14" fill="#fff" stroke="#222"/><g transform="translate(3,1.5) scale(0.09) translate(-328,-203)"><use href="#artall"/></g></svg>
<svg style="left:894px;top:249px" width="15" height="15"><rect x="0.5" y="0.5" width="14" height="14" fill="#fff" stroke="#222"/><g transform="translate(4.5,1.5) scale(0.09) translate(-328,-203)"><use href="#artfront"/></g></svg>
<svg style="left:894px;top:265px" width="15" height="15"><rect x="0.5" y="0.5" width="14" height="14" fill="#fff" stroke="#222"/><g transform="translate(3,1.5) scale(0.09) translate(-328,-203)"><use href="#artall"/></g></svg>
<div class="t" style="left:894px;top:237px;color:#d8d8d8;font-size:9.5px">图层 1</div>
<div class="t" style="left:911px;top:253px;color:#d8d8d8;font-size:9.5px">复制</div>
<div class="t" style="left:910px;top:269px;color:#d8d8d8;font-size:9.5px">&lt;</div><div class="t" style="left:918px;top:269px;color:#d8d8d8;font-size:9px">编组</div><div class="t" style="left:938px;top:269px;color:#d8d8d8;font-size:9.5px">&gt;</div>
<svg style="left:971px;top:237px" width="24" height="40" fill="none" stroke="#c8c8c8" stroke-width="1">
 <circle cx="4.5" cy="4.5" r="3"/><rect x="13" y="2" width="5" height="5" fill="#4a7cf0" stroke="#111"/>
 <circle cx="4.5" cy="20" r="3"/>
 <circle cx="4.5" cy="35.5" r="4"/><circle cx="4.5" cy="35.5" r="2"/><rect x="12.5" y="32" width="7" height="7" fill="#4a7cf0" stroke="#111"/>
</svg>
<svg style="left:990px;top:232px" width="5" height="5"><path d="M0,0 H5 V5 Z" fill="#d0d0d0"/></svg>
<!-- green circle -->
<div class="a" style="left:986px;top:302px;width:35px;height:35px;border-radius:50%;background:radial-gradient(circle at 50% 30%,#6ae07a,#2fb84a 70%);border:1.5px solid #e8e8e8"></div>
<div class="t" style="left:990px;top:314px;color:#fff;font-style:italic;font-size:9.5px">77</div>


</body></html>
